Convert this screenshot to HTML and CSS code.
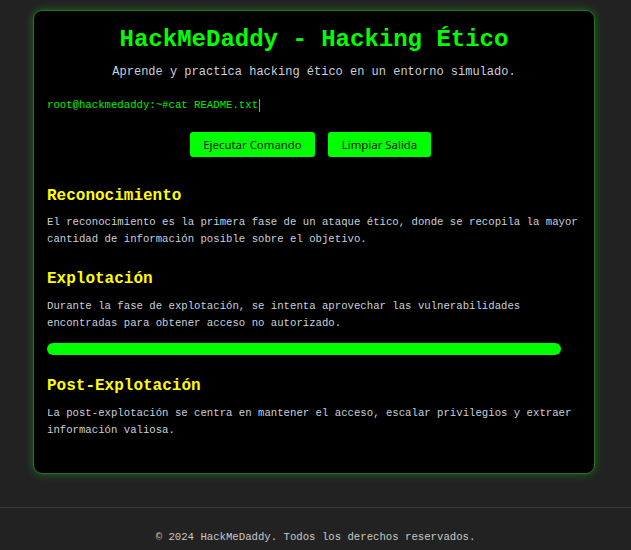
FILE: index.html
```html
<!DOCTYPE html>
<html lang="es">
<head>
<meta charset="utf-8">
<title>HackMeDaddy</title>
<link rel="stylesheet" href="styles.css">
</head>
<body>
<main class="container">
  <h1 class="title">HackMeDaddy - Hacking Ético</h1>
  <p class="subtitle">Aprende y practica hacking ético en un entorno simulado.</p>
  <div class="terminal"><span>root@hackmedaddy:~#cat README.txt</span><span class="cursor"></span></div>
  <div class="actions">
    <button class="btn btn-run">Ejecutar Comando</button>
    <button class="btn btn-clear">Limpiar Salida</button>
  </div>
  <section class="phase first">
    <h2>Reconocimiento</h2>
    <p>El reconocimiento es la primera fase de un ataque ético, donde se recopila la mayor cantidad de información posible sobre el objetivo.</p>
  </section>
  <section class="phase">
    <h2>Explotación</h2>
    <p>Durante la fase de explotación, se intenta aprovechar las vulnerabilidades encontradas para obtener acceso no autorizado.</p>
    <div class="progress" style="width: 96.3%"></div>
  </section>
  <section class="phase last">
    <h2>Post-Explotación</h2>
    <p>La post-explotación se centra en mantener el acceso, escalar privilegios y extraer información valiosa.</p>
  </section>
</main>
<footer class="footer">
  <p>© 2024 HackMeDaddy. Todos los derechos reservados.</p>
</footer>
</body>
</html>
```
FILE: styles.css
```css
html, body {
  margin: 0;
  padding: 0;
}
body {
  background: #222222;
  font-family: "Liberation Mono", "Courier New", monospace;
  color: #cccccc;
  overflow: hidden;
}
.container {
  margin: 10px 36px 0 33px;
  padding: 15px 13px 14px 13px;
  background: #000000;
  border: 1px solid #2e6b2e;
  border-radius: 9px;
  box-shadow: 0 0 8px rgba(0, 255, 0, 0.35);
}
.title {
  margin: 0;
  font-size: 24px;
  line-height: 28px;
  font-weight: bold;
  color: #00ff00;
  text-align: center;
}
.subtitle {
  margin: 10px 0 0;
  font-size: 12px;
  line-height: 16px;
  text-align: center;
  color: #c8d0dc;
}
.terminal {
  margin-top: 17px;
  display: flex;
  align-items: center;
  font-size: 10.66px;
  line-height: 16px;
  color: #00ee00;
}
.cursor {
  display: inline-block;
  width: 1px;
  height: 13px;
  margin-left: 1px;
  background: #00ff00;
}
.actions {
  margin-top: 19px;
  display: flex;
  justify-content: center;
  gap: 13px;
  padding-right: 7px;
}
.btn {
  height: 25px;
  border: none;
  border-radius: 3px;
  background: #00ff00;
  color: #0a0a0a;
  font-family: "Noto Sans", "DejaVu Sans", sans-serif;
  font-size: 11.4px;
  padding: 0 10px;
  cursor: pointer;
}
.btn-run { width: 125px; }
.btn-clear { width: 103px; }
.phase h2 {
  margin: 21px 0 9px;
  font-size: 16px;
  line-height: 20px;
  font-weight: bold;
  color: #ffff00;
}
.phase.first h2 {
  margin: 29px 0 8px;
}
.phase p {
  margin: 0;
  font-size: 10.66px;
  line-height: 17px;
  color: #c8d0dc;
}
.phase.last p {
  margin-bottom: 20px;
}
.progress {
  margin-top: 10.5px;
  height: 12px;
  border-radius: 6px;
  background: #00ff00;
}
.footer {
  margin-top: 33px;
  border-top: 1px solid #3a3a3a;
  padding-top: 21px;
  text-align: center;
}
.footer p {
  margin: 0;
  font-size: 10.66px;
  line-height: 17px;
  color: #c8c8c8;
}
```
